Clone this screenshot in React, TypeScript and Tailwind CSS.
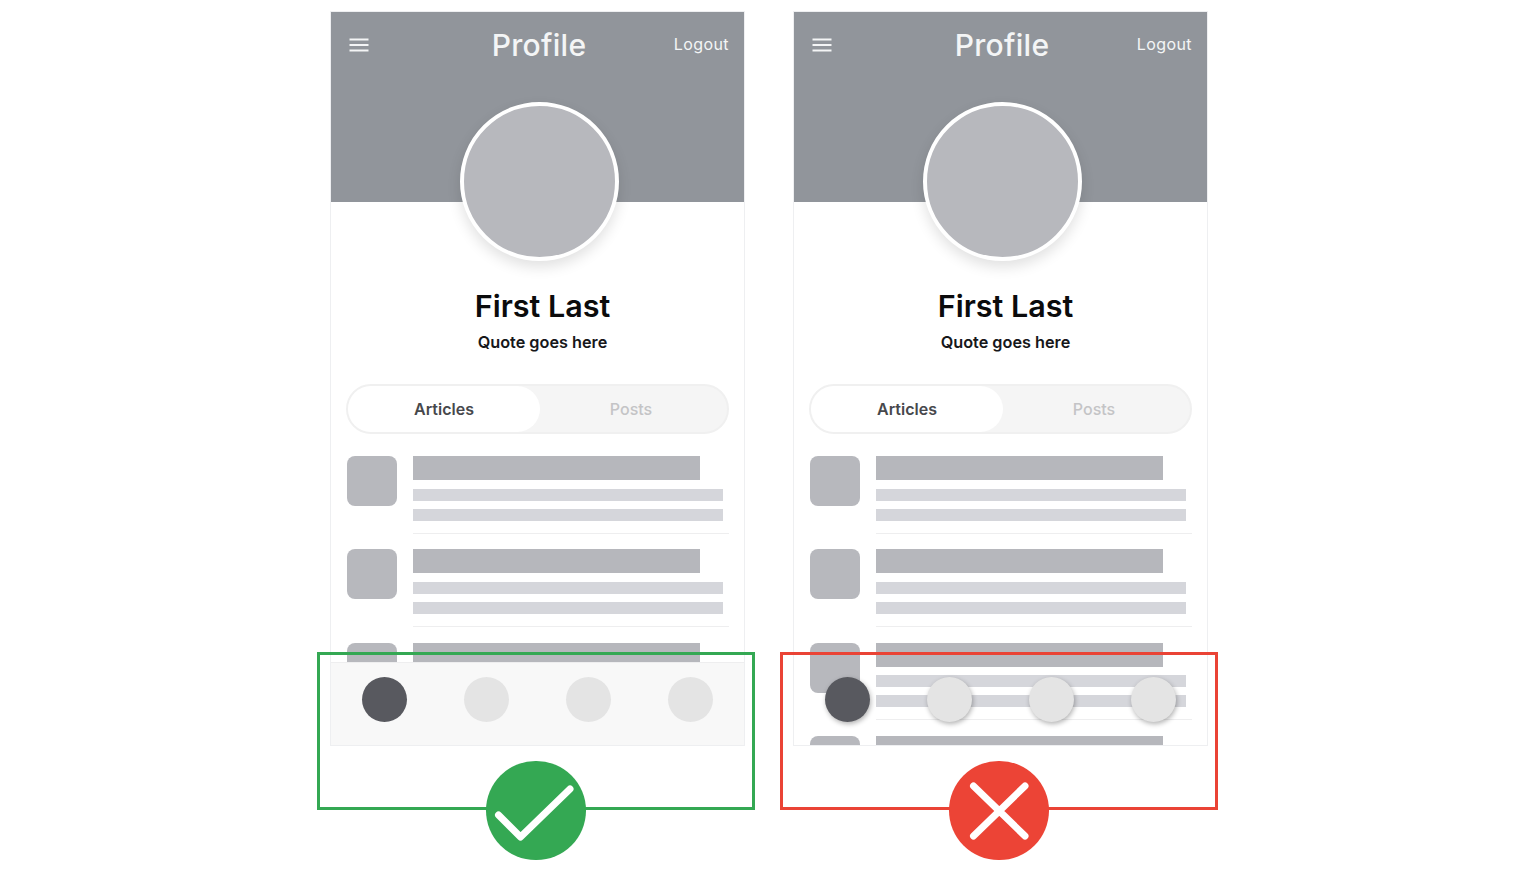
const rows = [0, 1, 2, 3];
const navDots = [0, 1, 2, 3];

function MenuIcon() {
  return (
    <svg className="mt-px" width="20" height="14" viewBox="0 0 20 14" fill="none" stroke="#f4f5f6" strokeWidth="2">
      <path d="M0.5 1.5H19.5M0.5 7H19.5M0.5 12.5H19.5" />
    </svg>
  );
}

function ListRow() {
  return (
    <div className="flex gap-4 pb-[15.8px]">
      <div className="w-[50px] h-[50px] shrink-0 rounded-lg bg-[#b7b8bd]" />
      <div className="flex-1">
        <div className="w-[287px] h-6 bg-[#b6b7bc]" />
        <div className="w-[310px] h-3 mt-[8.5px] bg-[#d5d6db]" />
        <div className="w-[310px] h-3 mt-2 bg-[#d5d6db]" />
        <div className="h-px mt-3 bg-[#eeeeef]" />
      </div>
    </div>
  );
}

function Phone({ good }: { good: boolean }) {
  return (
    <div className="relative w-[415px] h-[735px] overflow-hidden border border-[#eeeff1] bg-white">
      <div className="grid grid-cols-[1fr_auto_1fr] items-center h-[191px] -mt-px pt-[2px] pb-[126px] pl-[18px] pr-[15px] bg-[#91959b] text-[#f4f5f6]">
        <MenuIcon />
        <span className="mt-px text-[30px] tracking-[0.3px] font-medium leading-9">Profile</span>
        <span className="-mt-px text-right text-base tracking-[0.4px]">Logout</span>
      </div>
      <div className="relative ml-[128.5px] -mt-[100px] w-[159px] h-[159px] rounded-full border-4 border-white bg-[#b7b8bd] shadow-[0_6px_14px_rgba(0,0,0,0.12)]" />
      <div className="pl-[10px] text-center mt-[27px] text-[30.5px] leading-9 font-semibold text-[#0b0b0c]">First Last</div>
      <div className="pl-[10px] text-center mt-[6px] text-[16.25px] leading-6 font-semibold text-[#17171a]">Quote goes here</div>
      <div className="mx-[15px] mt-[30px] flex h-[50px] rounded-full border-2 border-[#f0f0f0] bg-[#f5f5f5] text-base font-semibold">
        <div className="flex w-[192px] items-center justify-center rounded-full bg-white text-[#47484c]">Articles</div>
        <div className="flex flex-1 items-center justify-center pr-[5px] text-[#c4c4c6] font-medium">Posts</div>
      </div>
      <div className="ml-4 mr-[15px] mt-[22px]">
        {rows.map((r) => (
          <ListRow key={r} />
        ))}
      </div>
      <div
        className={
          good
            ? "absolute left-0 right-0 bottom-0 h-[83px] flex gap-[57px] pl-[31px] pt-[14px] border-t border-[#eeeeef] bg-[#f8f8f8]"
            : "absolute left-0 right-0 bottom-0 h-[83px] flex gap-[57px] pl-[31px] pt-[15px]"
        }
      >
        {navDots.map((d) => (
          <div
            key={d}
            className={
              (d === 0 ? "bg-[#58595f] " : "bg-[#e4e4e4] ") +
              (good ? "w-[45px] h-[45px] rounded-full" : "w-[45px] h-[45px] rounded-full shadow-[1px_2px_5px_rgba(0,0,0,0.3)]")
            }
          />
        ))}
      </div>
    </div>
  );
}

function Example({ good }: { good: boolean }) {
  return (
    <div className="relative w-[437px] h-[884px] pl-3 pt-[11px]">
      <Phone good={good} />
      <div
        className={
          good
            ? "absolute -left-px top-[652px] w-[438px] h-[158px] border-[3px] border-[#34a853]"
            : "absolute -left-px top-[652px] w-[438px] h-[158px] border-[3px] border-[#ea4335]"
        }
      />
      <div
        className={
          good
            ? "absolute left-[168px] top-[761px] w-[100px] h-[99px] rounded-full bg-[#34a853]"
            : "absolute left-[168px] top-[761px] w-[100px] h-[99px] rounded-full bg-[#ec4436]"
        }
      >
        <svg width="100" height="99" viewBox="0 0 100 99" fill="none" stroke="#fff" strokeWidth="7" strokeLinecap="round" strokeLinejoin="round">
          {good ? <path d="M12.5 54L34.5 76L84 28" /> : <path d="M24.5 25L76 75M76 25L24.5 75" />}
        </svg>
      </div>
    </div>
  );
}

export default function App() {
  return (
    <main className="flex gap-[26px] pl-[318px] h-[884px] overflow-hidden bg-white font-['Inter',sans-serif]">
      <Example good />
      <Example good={false} />
    </main>
  );
}
